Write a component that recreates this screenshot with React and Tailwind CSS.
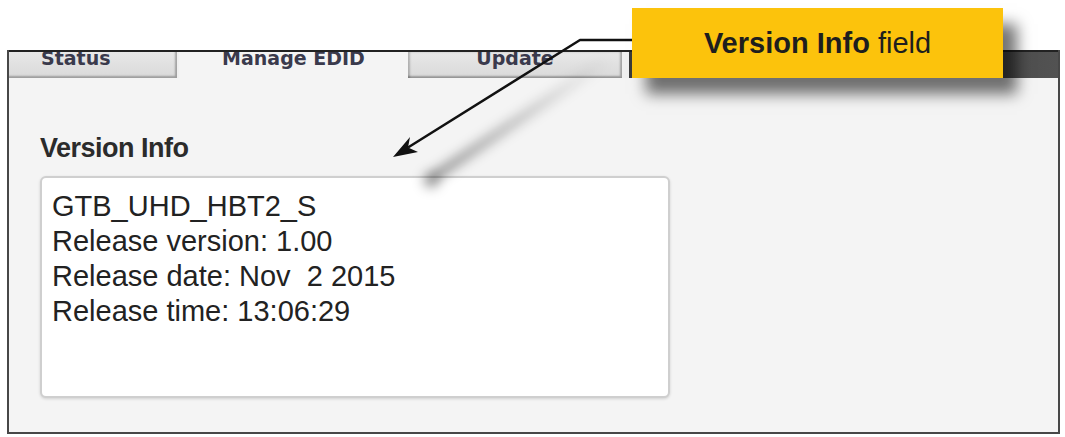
import React from "react";

const lines = [
  "GTB_UHD_HBT2_S",
  "Release version: 1.00",
  "Release date: Nov  2 2015",
  "Release time: 13:06:29",
];

function Tab({ label, active, className }) {
  return (
    <div
      className={`h-full overflow-hidden leading-none text-[19px] font-bold text-[#3a3a4c] ${
        active
          ? "bg-[#f4f4f4]"
          : "bg-gradient-to-b from-[#e8e8e8] to-[#d9d9d9] shadow-[inset_-2px_-2px_2px_rgba(0,0,0,0.28)]"
      } ${className || ""}`}
      style={{ fontFamily: "'DejaVu Sans', Verdana, sans-serif" }}
    >
      <div className="-mt-[3px] whitespace-nowrap">{label}</div>
    </div>
  );
}

function Callout() {
  return (
    <>
      <svg
        className="absolute left-0 top-0 pointer-events-none"
        width="1065"
        height="437"
        viewBox="0 0 1065 437"
      >
        <defs>
          <filter id="blur" x="-50%" y="-50%" width="200%" height="200%">
            <feGaussianBlur stdDeviation="6" />
          </filter>
          <linearGradient
            id="fade"
            gradientUnits="userSpaceOnUse"
            x1="610"
            y1="58"
            x2="430"
            y2="180"
          >
            <stop offset="0" stopColor="#000" stopOpacity="0" />
            <stop offset="1" stopColor="#000" stopOpacity="0.45" />
          </linearGradient>
        </defs>
        <g filter="url(#blur)">
          <line x1="610" y1="58" x2="432" y2="178" stroke="url(#fade)" strokeWidth="9" />
          <circle cx="431" cy="180" r="8" fill="#000" fillOpacity="0.35" />
        </g>
        <polyline
          points="634,40 580,40 408,147.5"
          fill="none"
          stroke="#111"
          strokeWidth="2.5"
          strokeLinejoin="round"
        />
        <polygon points="393,157 418,152 408,147.5 410,137" fill="#111" />
      </svg>
      <div className="absolute left-[632px] top-[8px] w-[371px] h-[70px] bg-[#fcc30c] shadow-[14px_16px_14px_rgba(0,0,0,0.55)] flex items-center justify-center text-[29px] text-[#1e1e1e] leading-none">
        <span>
          <b>Version Info</b> field
        </span>
      </div>
    </>
  );
}

export default function App() {
  return (
    <div
      className="relative w-[1065px] h-[437px] bg-white overflow-hidden"
      style={{ fontFamily: "'Liberation Sans', Arial, sans-serif" }}
    >
      <div className="ml-[7px] pt-[50px]">
        <div className="w-[1053px] h-[384px] border-x-2 border-b-2 border-[#474747] bg-[#f4f4f4] flex flex-col">
          <div className="h-[28px] border-t-2 border-[#222] flex">
            <Tab label="Status" className="w-[168px] pl-[32px]" />
            <div className="w-[2px] bg-[#f0f0f0]" />
            <Tab label="Manage EDID" active className="w-[229px] text-center" />
            <Tab
              label="Update"
              className="w-[214px] text-center shadow-[inset_2px_0_2px_rgba(0,0,0,0.22),inset_-2px_-2px_2px_rgba(0,0,0,0.28)]"
            />
            <div className="w-[7px] bg-[#efefef]" />
            <div className="flex-1 bg-gradient-to-r from-[#3a3a3a] via-[#3f3f3f] to-[#525252]" />
          </div>

          <div className="pl-[31px] pt-[54px]">
            <div className="text-[27px] leading-[32px] font-bold tracking-[-0.5px] text-[#2b2b2b]">
              Version Info
            </div>
            <div className="mt-[12px] w-[630px] h-[222px] bg-white border-2 border-[#cfcfcf] rounded-[6px] shadow-[0_1px_3px_rgba(0,0,0,0.15)] pl-[10px] pt-[11px] text-[29px] leading-[35px] text-[#222]">
              {lines.map((l) => (
                <div key={l} className="whitespace-pre">
                  {l}
                </div>
              ))}
            </div>
          </div>
        </div>
      </div>
      <Callout />
    </div>
  );
}
